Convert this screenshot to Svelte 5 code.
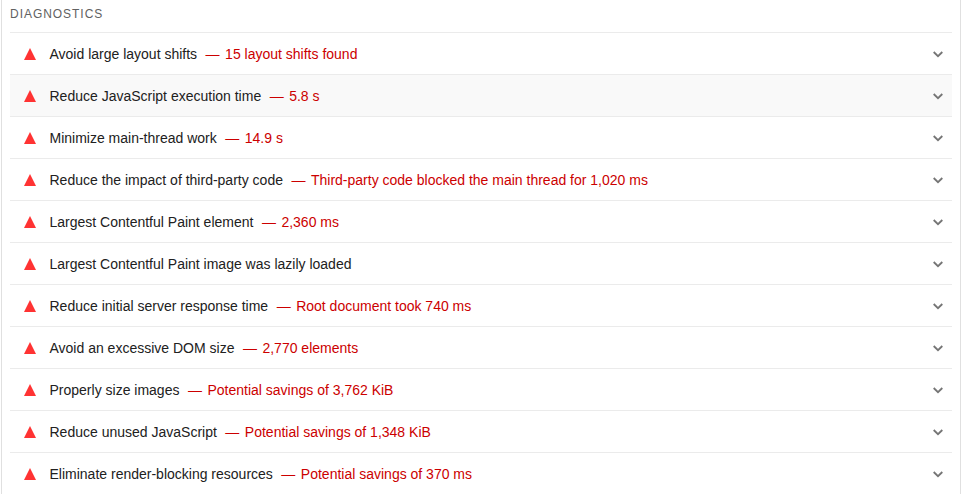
<script>
  const rows = [
    ['Avoid large layout shifts', '15 layout shifts found'],
    ['Reduce JavaScript execution time', '5.8 s'],
    ['Minimize main-thread work', '14.9 s'],
    ['Reduce the impact of third-party code', 'Third-party code blocked the main thread for 1,020 ms'],
    ['Largest Contentful Paint element', '2,360 ms'],
    ['Largest Contentful Paint image was lazily loaded', ''],
    ['Reduce initial server response time', 'Root document took 740 ms'],
    ['Avoid an excessive DOM size', '2,770 elements'],
    ['Properly size images', 'Potential savings of 3,762 KiB'],
    ['Reduce unused JavaScript', 'Potential savings of 1,348 KiB'],
    ['Eliminate render-blocking resources', 'Potential savings of 370 ms']
  ];
</script>

<div class="page">
  <div class="heading">DIAGNOSTICS</div>
  <div class="list">
    {#each rows as [title, value], i}
      <div class="row" class:hover={i === 1}>
        <svg class="tri" width="12" height="12" viewBox="0 0 12 12"><polygon points="6,0 12,12 0,12" /></svg>
        <span class="title">{title}</span>
        {#if value}<span class="value"><span class="dash">—</span>{value}</span>{/if}
        <svg class="chev" width="10" height="7" viewBox="0 0 10 7"><path d="M0.7 1 L5 5.2 L9.3 1" /></svg>
      </div>
    {/each}
  </div>
</div>

<style>
  :global(body) { margin: 0; background: #fff; }
  .page {
    width: 960px;
    height: 494px;
    margin-left: 1px;
    box-sizing: border-box;
    overflow: hidden;
    border-left: 1px solid #e0e0e0;
    border-right: 1px solid #e0e0e0;
    padding: 0 8px 0 8px;
    font-family: "Liberation Sans", Arial, sans-serif;
    font-size: 14px;
  }
  .heading {
    height: 32px;
    line-height: 29px;
    font-size: 12px;
    letter-spacing: 0.96px;
    color: #616161;
  }
  .row {
    height: 41px;
    border-top: 1px solid #ebebeb;
    display: flex;
    align-items: center;
    color: #212121;
    line-height: 20px;
    padding-left: 14px;
  }
  .row.hover { background: #f9f9f9; }
  .tri { fill: #ff3333; flex: none; margin: 1px 13.5px 0 0; }
  .title { white-space: nowrap; }
  .value { color: #c00; white-space: nowrap; margin-left: 8.5px; }
  .dash { margin-right: 5.5px; }
  .chev { margin: 1px 9px 0 auto; flex: none; fill: none; stroke: #757575; stroke-width: 1.8; }
</style>
